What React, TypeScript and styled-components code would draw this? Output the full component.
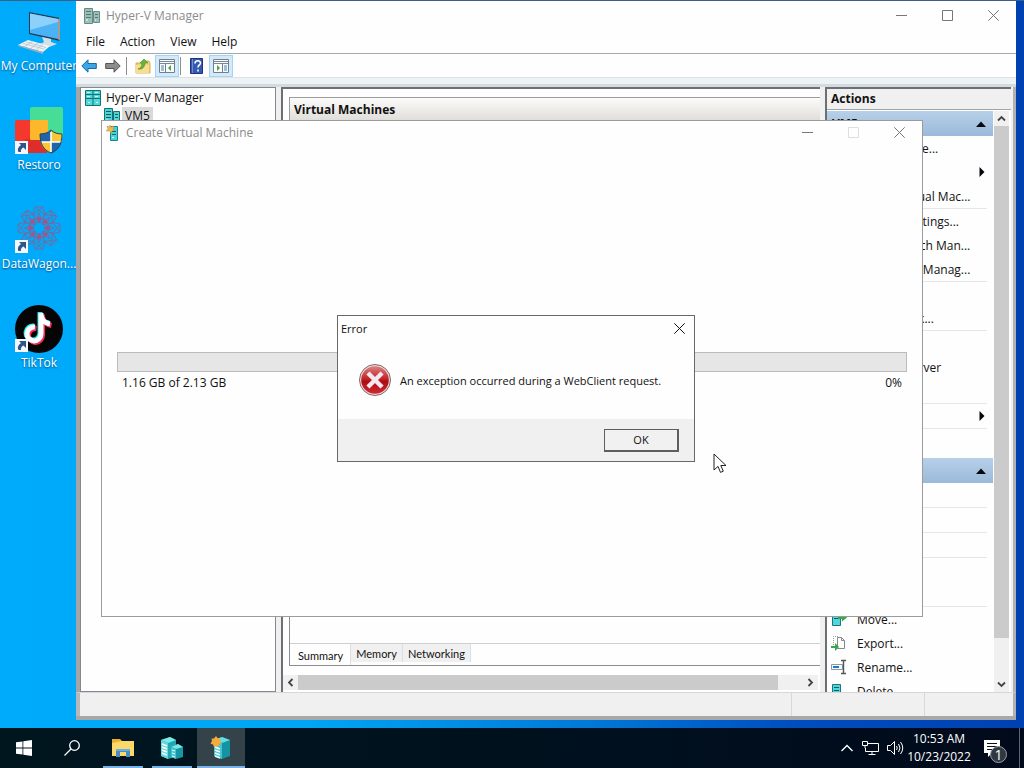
import { useState } from "react";
import styled, { createGlobalStyle } from "styled-components";

type ActionItem = { label: string; icon?: string; arrow?: boolean; line?: boolean };

const hostActions: ActionItem[] = [
  { label: "Quick Create..." },
  { label: "New", arrow: true },
  { label: "Import Virtual Mac...", line: true },
  { label: "Hyper-V Settings..." },
  { label: "Virtual Switch Man..." },
  { label: "Virtual SAN Manag...", line: true },
  { label: "Edit Disk" },
  { label: "Inspect Disk...", line: true },
  { label: "Service" },
  { label: "Remove Server" },
  { label: "Refresh", line: true },
  { label: "View", arrow: true, line: true },
  { label: "Help" },
];

const machineActions: ActionItem[] = [
  { label: "Connect...", line: true },
  { label: "Settings...", line: true },
  { label: "Start", line: true },
  { label: "Checkpoint" },
  { label: "Revert...", line: true },
  { label: "Move...", icon: "move" },
  { label: "Export...", icon: "export" },
  { label: "Rename...", icon: "rename" },
  { label: "Delete...", icon: "delete" },
];

const Minimize = () => (
  <svg width="11" height="11" viewBox="0 0 11 11" stroke="currentColor">
    <path d="M0 5.500h11" />
  </svg>
);

const Maximize = () => (
  <svg width="11" height="11" viewBox="0 0 11 11" stroke="currentColor" fill="none">
    <path d="M.5.500h10v10H.5z" />
  </svg>
);

const Close = () => (
  <svg width="11" height="11" viewBox="0 0 11 11" stroke="currentColor">
    <path d="M.3.300l10.400 10.400M10.700.300L.3 10.700" />
  </svg>
);

const Shortcut = () => (
  <g>
    <path d="M0 34h13v13H0z" fill="#f4f8fc" />
    <path d="M4 36h7v7l-2.500-2.500c-2 1-3 2.500-2.500 4.500H3.500c-1.500-3 0-5 2.500-7z" fill="#2f568c" />
  </g>
);

const ComputerIcon = () => (
  <svg width="48" height="48" viewBox="0 0 48 48">
    <path d="M14 4l31 6v23l-31-7z" fill="#26394d" />
    <path d="M15 5.500l28 5.500v20l-28-6z" fill="#4bb3f5" />
    <path d="M15 5.500l28 5.500v3L15 22z" fill="#8bd1fb" />
    <path d="M43 11l2-1v23l-2-2z" fill="#a99a8d" />
    <path d="M27 29l9 2v3l6 2-8 3-9-3 4-2z" fill="#d6dfe6" />
    <path d="M13 32l22 6-7 6L3 37z" fill="#eef2f5" />
    <path d="M3 37l25 7v2L3 38z" fill="#9fb1c0" />
    <path d="M11 34l20 5.500M8 35.500l21 5.500M18 33l-9 6M23 35l-8 6M28 36l-7 6" stroke="#b3c2ce" strokeWidth=".8" />
  </svg>
);

const RestoroIcon = () => (
  <svg width="48" height="48" viewBox="0 0 48 48">
    <rect x="15" y="0" width="33" height="31" rx="2" fill="#46dd96" />
    <path d="M2 13h14l2 33H10L0 38V15q0-2 2-2z" fill="#f5382e" />
    <path d="M10 32h22v14H12z" fill="#dc2f2c" />
    <path d="M15 2v11h17v18h0V17q0-4-4-4h-13z" fill="#7bd05c" />
    <rect x="15" y="13" width="18" height="20" rx="1" fill="#fcb72b" />
    <path d="M36 23c3 3 7 4 11 4 0 9-3 16-11 19-8-3-11-10-11-19 4 0 8-1 11-4z" fill="#1f65a8" />
    <path d="M36 35h10.500C45 40 42 44 36 46zM36 23v12H25v-8c4 0 8-1 11-4z" fill="#1f65a8" />
    <path d="M36 23c3 3 7 4 11 4v8H36zM36 35v11c-6-2-9-6-10.500-11z" fill="#fac636" />
    <path d="M36 25v20M26 35h20" stroke="#fff" strokeWidth="1.600" />
    <path d="M36 23c3 3 7 4 11 4 0 9-3 16-11 19-8-3-11-10-11-19 4 0 8-1 11-4z" fill="none" stroke="#29455e" />
    <Shortcut />
  </svg>
);

const WagonIcon = () => (
  <svg width="48" height="48" viewBox="0 0 48 48">
    <g fill="none" stroke="#6f6da3" strokeWidth="1">
      {[0, 45, 90, 135, 180, 225, 270, 315].map((deg) => (
        <g key={deg} transform={`rotate(${deg} 24 22)`}>
          <path d="M20 1l8 0 2 8-6 8-6-8zM20 1l10 8M28 1l-10 8M21 14l3-7 3 7" />
        </g>
      ))}
      <circle cx="24" cy="22" r="6" />
    </g>
    <g fill="#b84a7c">
      {[0, 45, 90, 135, 180, 225, 270, 315].map((deg) => (
        <path key={deg} d="M22 13l2-3 2 3-2 3z" transform={`rotate(${deg} 24 22)`} />
      ))}
    </g>
    <Shortcut />
  </svg>
);

const TikTokIcon = () => (
  <svg width="48" height="48" viewBox="0 0 48 48">
    <circle cx="24" cy="24" r="24" fill="#050505" />
    <g fill="none" strokeWidth="5">
      <path d="M26 8v21a7 7 0 1 1-6-7M26 10c1 6 4 8 9 9" stroke="#25ecec" transform="translate(-1 -1)" />
      <path d="M26 8v21a7 7 0 1 1-6-7M26 10c1 6 4 8 9 9" stroke="#f72c5d" transform="translate(1.500 1.500)" />
      <path d="M26 8v21a7 7 0 1 1-6-7M26 10c1 6 4 8 9 9" stroke="#fff" />
    </g>
    <Shortcut />
  </svg>
);

const ServerIcon = ({ faded = false }: { faded?: boolean }) => (
  <svg width="16" height="16" viewBox="0 0 16 16" opacity={faded ? 0.8 : 1}>
    <path d="M.5.500h8v15h-8zM9.500 3.500h6v11h-6z" fill={faded ? "#7fb4a8" : "#52d3d0"} stroke={faded ? "#466e6b" : "#107078"} />
    <path d="M2 3.500h5M2 6.500h5M2 9.500h5M11 6.500h3M11 9.500h3" stroke={faded ? "#35534e" : "#0b6069"} />
    <path d="M2 12h2M11 12h1" stroke="#eefcfc" />
  </svg>
);

const RackIcon = () => (
  <svg width="16" height="16" viewBox="0 0 16 16">
    <path d="M.5.500h15v15H.5z" fill="#53d7d6" stroke="#0f7379" />
    <path d="M8 0v16M1 4.500h14M1 8.500h14" stroke="#0f7379" />
    <path d="M2 2.500h3M10 2.500h3M2 6.500h3M10 6.500h3M3 12.500h2M11 12.500h2" stroke="#d4ffff" />
  </svg>
);

const WizardIcon = () => (
  <svg width="14" height="18" viewBox="0 0 14 18">
    <path d="M4.500 2.500h7v14h-7z" fill="#45d4dc" stroke="#21818b" />
    <path d="M6 7.500h4M6 10.500h4" stroke="#15656e" />
    <path d="M6 13.500h2" stroke="#fff" />
    <path d="M4 1l1 2 3-1-1 3 2 1.500-3 .5L5 9.500 3.500 7 0 7l2-2-1-3 2.500 1z" fill="#e9bd47" stroke="#a97d2a" strokeWidth=".4" />
  </svg>
);

const Arrow = ({ forward = false }: { forward?: boolean }) => (
  <svg width="16" height="14" viewBox="0 0 16 14">
    <path
      d="M.8 7L7 .8v3.700h8.300v5H7v3.700z"
      transform={forward ? "rotate(180 8 7)" : undefined}
      fill={forward ? "#8c8c8c" : "#38a6e8"}
      stroke={forward ? "#555" : "#1c679c"}
    />
  </svg>
);

const FolderUp = () => (
  <svg width="16" height="16" viewBox="0 0 16 16">
    <path d="M1 5h7l1-2h5l1 2v10H1z" fill="#f3d271" stroke="#c5a24c" strokeWidth=".8" />
    <path d="M1 7h13v8H1z" fill="#f8de8e" />
    <path d="M3 11c3-1 4-3 4-6H5l4-4 4 4h-3c0 4-3 7-7 6z" fill="#65b637" stroke="#41802a" strokeWidth=".5" />
  </svg>
);

const PaneIcon = ({ right = false }: { right?: boolean }) => (
  <svg width="16" height="14" viewBox="0 0 16 14">
    <path d="M.5.500h15v13H.5z" fill="#f8fbfd" stroke="#747f8b" />
    <path d="M1 2.500h14M1 4.500h14" stroke="#7c8792" />
    <path d={right ? "M9.500 5v8" : "M6.500 5v8"} stroke="#747f8b" />
    <path d={right ? "M11 7h3M11 9h3M11 11h3" : "M2 7h3M2 9h3M2 11h3"} stroke="#4a83ac" />
    <path d={right ? "M4 6l3 3-3 3z" : "M12 6L9 9l3 3z"} fill="#51a13d" />
  </svg>
);

const HelpIcon = () => (
  <svg width="14" height="16" viewBox="0 0 14 16">
    <path d="M.5.500h12v15H.5z" fill="#3459b0" stroke="#1b357d" />
    <path d="M2.500 1v14" stroke="#708ed2" />
    <path d="M5 5.500C5 2 10.500 2 10.500 5c0 2-2.500 2-2.500 4.500M8 11.500v2" fill="none" stroke="#fff" strokeWidth="1.600" />
  </svg>
);

const ActionIcon = ({ name }: { name?: string }) => (
  <svg width="16" height="16" viewBox="0 0 16 16">
    {(name === "move" || name === "delete") && (
      <g>
        <path d="M1.500 1.500h8v13h-8z" fill="#51d6dd" stroke="#18767d" />
        <path d="M3 4.500h5M3 7.500h5" stroke="#0c5d66" />
      </g>
    )}
    {name === "move" && <path d="M7 5h4V2l5 4.500-5 4V8H7z" fill="#35a849" />}
    {name === "export" && (
      <g>
        <path d="M2.500 10V1.500h5" fill="none" stroke="#999" strokeDasharray="1 1" />
        <path d="M6.500 2.500h4l3 3v8h-7z" fill="#fff" stroke="#888" />
        <path d="M10.500 2.500v3h3" fill="none" stroke="#888" />
        <path d="M0 11h4V8l4 4-4 4v-3H0z" fill="#35a849" />
      </g>
    )}
    {name === "rename" && (
      <g>
        <path d="M.5 5.500h11v5H.5z" fill="#f4faff" stroke="#8a9aa8" />
        <path d="M2 7h6v2H2z" fill="#1f79c2" />
        <path d="M10 1.500h5M12.500 2v12M10 14.500h5" stroke="#555" strokeWidth="1.400" />
      </g>
    )}
  </svg>
);

const Chevron = ({ turn = 0 }: { turn?: number }) => (
  <svg width="9" height="9" viewBox="0 0 9 9">
    <path d="M1 6.500L4.500 3 8 6.500" transform={`rotate(${turn} 4.500 4.500)`} fill="none" stroke="#444" strokeWidth="1.800" />
  </svg>
);

const Triangle = ({ side = false }: { side?: boolean }) => (
  <svg width="10" height="10" viewBox="0 0 10 10">
    <path d={side ? "M2.500 0v10l5-5z" : "M0 8h10L5 2.500z"} fill="#05070f" />
  </svg>
);

const ErrorIcon = () => (
  <svg width="32" height="32" viewBox="0 0 32 32">
    <defs>
      <linearGradient id="red" x1="0" y1="0" x2="0" y2="1">
        <stop offset="0" stopColor="#d98383" />
        <stop offset=".45" stopColor="#c4262b" />
        <stop offset=".55" stopColor="#ae0c13" />
        <stop offset="1" stopColor="#cf2a31" />
      </linearGradient>
    </defs>
    <circle cx="16" cy="16" r="15.500" fill="#e9d9d9" stroke="#8e6262" />
    <circle cx="16" cy="16" r="13.800" fill="url(#red)" />
    <path d="M10.500 10.500l11 11M21.500 10.500l-11 11" stroke="#f5e9ef" strokeWidth="4.400" strokeLinecap="square" />
  </svg>
);

const WindowsLogo = () => (
  <svg width="16" height="16" viewBox="0 0 16 16" fill="#fff">
    <path d="M0 2.300l6.500-.9v6.200H0zM7.300 1.300L16 0v7.600H7.300zM0 8.400h6.500v6.200L0 13.700zM7.300 8.400H16V16l-8.700-1.300z" />
  </svg>
);

const SearchIcon = () => (
  <svg width="16" height="16" viewBox="0 0 16 16" fill="none" stroke="#fff" strokeWidth="1.300">
    <circle cx="10.500" cy="5.500" r="4.800" />
    <path d="M7 9L.5 15.500" />
  </svg>
);

const ExplorerIcon = () => (
  <svg width="22" height="20" viewBox="0 0 22 20">
    <path d="M0 1h8l2 2h12v15H0z" fill="#e9ae35" />
    <path d="M0 5l10-2h12v15H0z" fill="#fbd869" />
    <path d="M4 11h14v8h-4v-5H8v5H4z" fill="#438dc9" />
    <path d="M4 11h14v2H4z" fill="#69afdf" />
  </svg>
);

const TaskServerIcon = () => (
  <svg width="24" height="24" viewBox="0 0 24 24">
    <path d="M1 4l9-3 6 3v17l-8 2-7-3z" fill="#20a9b5" />
    <path d="M1 4l9-3 6 3-8 3z" fill="#7deae7" />
    <path d="M1 4l7 3v16l-7-3z" fill="#61d9db" />
    <path d="M2 8l5 2M2 11l5 2M2 14l5 2M2 17l5 2" stroke="#fff" strokeWidth="1.500" />
    <path d="M11 11l7-3 5 3v10l-7 2-5-2z" fill="#1796a4" />
    <path d="M11 11l7-3 5 3-7 2z" fill="#7ae7e5" />
    <path d="M11 11l5 2v10l-5-2z" fill="#43c5cb" />
    <path d="M12 14l3 1M12 17l3 1M12 20l3 1" stroke="#fff" />
  </svg>
);

const TaskWizardIcon = () => (
  <svg width="22" height="24" viewBox="0 0 22 24">
    <path d="M4 4l8-3 8 3v16l-8 3-8-3z" fill="#1493a2" />
    <path d="M4 4l8-3 8 3-8 3z" fill="#60dee2" />
    <path d="M4 4l8 3v16l-8-3z" fill="#42c4ce" />
    <path d="M5 11l5 2M5 14l5 2M5 17l5 2M5 20l5 2" stroke="#fff" strokeWidth="1.400" />
    <path d="M6 0l1.500 2L10 2 10 4.500 12 6 9.500 8 9 10.500 6.500 10 4 11 3 8.500.5 7.500 2 5 1.500 2.500 4 2.500z" fill="#f2ab3c" />
  </svg>
);

const App = () => {
  const [dialogOpen, setDialogOpen] = useState(true);
  return (
    <Desktop>
      <GlobalStyle />
      <Workspace>
        <Shortcuts>
          <ShortcutItem><ComputerIcon />My Computer</ShortcutItem>
          <ShortcutItem><RestoroIcon />Restoro</ShortcutItem>
          <ShortcutItem><WagonIcon />DataWagon...</ShortcutItem>
          <ShortcutItem><TikTokIcon />TikTok</ShortcutItem>
        </Shortcuts>

        <ManagerWindow>
          <TitleBar $main>
            <ServerIcon faded />
            <TitleText>Hyper-V Manager</TitleText>
            <CaptionButton aria-label="Minimize"><Minimize /></CaptionButton>
            <CaptionButton aria-label="Maximize"><Maximize /></CaptionButton>
            <CaptionButton aria-label="Close"><Close /></CaptionButton>
          </TitleBar>
          <MenuBar>
            <MenuButton>File</MenuButton>
            <MenuButton>Action</MenuButton>
            <MenuButton>View</MenuButton>
            <MenuButton>Help</MenuButton>
          </MenuBar>
          <Toolbar>
            <ToolButton aria-label="Back"><Arrow /></ToolButton>
            <ToolButton aria-label="Forward"><Arrow forward /></ToolButton>
            <ToolLine />
            <ToolButton aria-label="Up"><FolderUp /></ToolButton>
            <ToolButton aria-label="Console tree" $pressed><PaneIcon /></ToolButton>
            <ToolLine />
            <ToolButton aria-label="Help"><HelpIcon /></ToolButton>
            <ToolButton aria-label="Action pane" $pressed><PaneIcon right /></ToolButton>
          </Toolbar>
          <Strip />
          <Panes>
            <TreePane>
              <TreeRow $level={0}><RackIcon /><TreeLabel>Hyper-V Manager</TreeLabel></TreeRow>
              <TreeRow $level={1}><ServerIcon /><TreeLabel $selected>VM5</TreeLabel></TreeRow>
            </TreePane>
            <CenterPane>
              <MachinesBox>
                <PaneHeading>Virtual Machines</PaneHeading>
              </MachinesBox>
              <DetailsBox>
                <Tabs>
                  <Tab $active>Summary</Tab>
                  <Tab>Memory</Tab>
                  <Tab>Networking</Tab>
                </Tabs>
              </DetailsBox>
              <HScroll>
                <ScrollButton aria-label="Scroll left"><Chevron turn={-90} /></ScrollButton>
                <HTrack><HThumb /></HTrack>
                <ScrollButton aria-label="Scroll right"><Chevron turn={90} /></ScrollButton>
              </HScroll>
            </CenterPane>
            <ActionsPane>
              <ActionsHeading>Actions</ActionsHeading>
              <ActionsBody>
                <ActionsList>
                  <Group title="VM5" items={hostActions} />
                  <Group title="Server" items={machineActions} />
                </ActionsList>
                <VScroll>
                  <ScrollButton aria-label="Scroll up"><Chevron /></ScrollButton>
                  <VTrack><VThumb /></VTrack>
                  <ScrollButton aria-label="Scroll down"><Chevron turn={180} /></ScrollButton>
                </VScroll>
              </ActionsBody>
            </ActionsPane>
          </Panes>
          <StatusBar><span /><span /><span /></StatusBar>
        </ManagerWindow>

        <CreateWindow>
          <TitleBar>
            <WizardIcon />
            <TitleText>Create Virtual Machine</TitleText>
            <CaptionButton aria-label="Minimize"><Minimize /></CaptionButton>
            <CaptionButton aria-label="Maximize" disabled><Maximize /></CaptionButton>
            <CaptionButton aria-label="Close"><Close /></CaptionButton>
          </TitleBar>
          <Download>
            <ProgressTrack role="progressbar" aria-valuenow={0} aria-label="Download progress" />
            <ProgressLabels>
              <span>1.16 GB of 2.13 GB</span>
              <span>0%</span>
            </ProgressLabels>
          </Download>
        </CreateWindow>

        {dialogOpen && (
          <ErrorDialog role="alertdialog" aria-labelledby="error-title">
            <ErrorTitle>
              <span id="error-title">Error</span>
              <DialogClose aria-label="Close" onClick={() => setDialogOpen(false)}><Close /></DialogClose>
            </ErrorTitle>
            <ErrorMessage>
              <ErrorIcon />
              <ErrorText>An exception occurred during a WebClient request.</ErrorText>
            </ErrorMessage>
            <ErrorFooter>
              <OkButton onClick={() => setDialogOpen(false)}>OK</OkButton>
            </ErrorFooter>
          </ErrorDialog>
        )}

        <Pointer width="14" height="21" viewBox="0 0 14 21">
          <path d="M1 1v16l4-3.600 2.500 6 2.800-1.200-2.500-5.700H13z" fill="#fff" stroke="#222" />
        </Pointer>
      </Workspace>

      <Taskbar>
        <TaskButton aria-label="Start"><WindowsLogo /></TaskButton>
        <TaskButton aria-label="Search"><SearchIcon /></TaskButton>
        <TaskApps>
          <TaskButton aria-label="File Explorer" $running><ExplorerIcon /></TaskButton>
          <TaskButton aria-label="Hyper-V Manager" $running><TaskServerIcon /></TaskButton>
          <TaskButton aria-label="Create Virtual Machine" $running $active><TaskWizardIcon /></TaskButton>
        </TaskApps>
        <Tray>
          <TrayButton aria-label="Show hidden icons">
            <svg width="12" height="8" viewBox="0 0 12 8" fill="none" stroke="#fff" strokeWidth="1.400">
              <path d="M.5 7L6 1.500 11.500 7" />
            </svg>
          </TrayButton>
          <TrayButton aria-label="Network">
            <svg width="18" height="16" viewBox="0 0 18 16" fill="none" stroke="#fff">
              <path d="M5.500 3.500h11v8h-13V8M.5 1.500h5v4h-5zM3 5.500V8M10 12v2M6.500 14.500h7" />
            </svg>
          </TrayButton>
          <TrayButton aria-label="Volume">
            <svg width="18" height="16" viewBox="0 0 18 16" fill="none" stroke="#fff">
              <path d="M1.500 5.500h3l4-4v13l-4-4h-3zM10.500 6q1.500 2 0 4M12.500 4q3 4 0 8M14.500 2q4.500 6 0 12" />
            </svg>
          </TrayButton>
          <Clock>
            <span>10:53 AM</span>
            <span>10/23/2022</span>
          </Clock>
          <NoticeButton aria-label="1 notification">
            <svg width="18" height="18" viewBox="0 0 18 18">
              <path d="M1 1h16v13H9l-4 4v-4H1z" fill="#fff" />
              <path d="M4 4.500h10M4 7.500h10M4 10.500h7" stroke="#07111e" />
            </svg>
            <Badge>1</Badge>
          </NoticeButton>
          <ShowDesktop aria-label="Show desktop" />
        </Tray>
      </Taskbar>
    </Desktop>
  );
};

const Group = ({ title, items }: { title: string; items: ActionItem[] }) => (
  <GroupBox>
    <GroupHeading>{title}<Triangle /></GroupHeading>
    {items.map((item) => (
      <ActionRow key={item.label} $line={item.line}>
        <ActionIcon name={item.icon} />
        <ActionLabel>{item.label}</ActionLabel>
        {item.arrow && <Triangle side />}
      </ActionRow>
    ))}
  </GroupBox>
);

const GlobalStyle = createGlobalStyle`
  * {
    box-sizing: border-box;
  }
  body {
    margin: 0;
    overflow: hidden;
    font-family: "Open Sans", "Noto Sans", sans-serif;
    font-size: 12px;
    color: #111;
  }
  button {
    padding: 0;
    border: 0;
    background: none;
    font: inherit;
    color: inherit;
  }
  svg {
    flex: none;
    display: block;
  }
`;

const Desktop = styled.div`
  height: 100vh;
  display: grid;
  grid-template-rows: 1fr 40px;
`;
const Workspace = styled.main`
  position: relative;
  min-height: 0;
  overflow: hidden;
  border-top: 1px solid #3d5f82;
  background: linear-gradient(90deg, #00abfc 0%, #00a5f5 30%, #0078d8 58%, #004dbe 78%, #0041b2 100%);
`;
const Shortcuts = styled.nav`
  width: 78px;
`;
const ShortcutItem = styled.button`
  width: 78px;
  height: 99px;
  padding-top: 7px;
  display: flex;
  flex-direction: column;
  align-items: center;
  line-height: 20px;
  color: #fff;
  white-space: nowrap;
  text-shadow: 0 1px 2px #00467e;
`;

const ManagerWindow = styled.section`
  position: absolute;
  inset: 0 8px 8px 76px;
  display: flex;
  flex-direction: column;
  background: #fefefe;
  border-bottom: 4px solid #a6a8a9;
`;
const TitleBar = styled.header<{ $main?: boolean }>`
  height: ${({ $main }) => ($main ? 29 : 23)}px;
  flex: none;
  display: flex;
  align-items: center;
  padding-left: ${({ $main }) => ($main ? 8 : 4)}px;
  color: #8c8c8c;
`;
const TitleText = styled.h1`
  flex: 1;
  margin: 0 0 0 6px;
  font-size: 12px;
  font-weight: 400;
`;
const CaptionButton = styled.button`
  width: 46px;
  height: 23px;
  display: grid;
  place-items: center;
  color: #777;
  &:disabled {
    color: #dedede;
  }
`;
const MenuBar = styled.nav`
  height: 24px;
  flex: none;
  display: flex;
  gap: 15px;
  padding-left: 10px;
  border-bottom: 1px solid #a6a9ab;
`;
const MenuButton = styled.button`
  line-height: 24px;
`;
const Toolbar = styled.div`
  height: 23px;
  flex: none;
  display: flex;
  align-items: center;
  padding-left: 1px;
`;
const ToolButton = styled.button<{ $pressed?: boolean }>`
  width: 24px;
  height: 22px;
  display: grid;
  place-items: center;
  border: 1px solid ${({ $pressed }) => ($pressed ? "#a5d3f3" : "transparent")};
  background: ${({ $pressed }) => ($pressed ? "#d3eafb" : "none")};
`;
const ToolLine = styled.span`
  width: 1px;
  height: 18px;
  margin: 0 4px 0 1px;
  background: #8d8d8d;
`;
const Strip = styled.div`
  height: 10px;
  flex: none;
  border-top: 1px solid #dfe2e4;
  border-bottom: 3px solid #d1dbe0;
  background: #edf2f5;
`;
const Panes = styled.div`
  flex: 1;
  min-height: 0;
  display: grid;
  grid-template-columns: 196px minmax(0, 1fr) 186px;
  column-gap: 5px;
  padding-right: 2px;
  border-left: 4px solid #a3a5a6;
  border-right: 3px solid #b2b2b4;
  background: #f0f0f0;
`;
const TreePane = styled.aside`
  padding-top: 1px;
  border: 1px solid #828790;
  background: #fefefe;
`;
const TreeRow = styled.div<{ $level: number }>`
  height: 18px;
  display: flex;
  align-items: center;
  gap: 2px;
  padding-left: ${({ $level }) => 4 + $level * 19}px;
`;
const TreeLabel = styled.span<{ $selected?: boolean }>`
  padding: 0 3px;
  line-height: 18px;
  background: ${({ $selected }) => ($selected ? "#d9d9d9" : "none")};
`;
const CenterPane = styled.section`
  min-width: 0;
  display: flex;
  flex-direction: column;
  border-top: 2px solid #6d6f72;
  border-left: 2px solid #6d6f72;
  background: #fefefe;
`;
const MachinesBox = styled.div`
  margin: 8px 0 0 6px;
  border: 1px solid #9b9b9b;
  border-width: 1px 0 0 1px;
`;
const PaneHeading = styled.h2`
  margin: 0;
  padding-left: 4px;
  font-size: 12px;
  line-height: 24px;
  background: linear-gradient(#fbfbfa, #dedcd7);
`;
const DetailsBox = styled.div`
  flex: 1;
  display: flex;
  align-items: flex-end;
  margin-left: 6px;
  border: 1px solid #8d8d8d;
  border-width: 0 0 1px 1px;
`;
const Tabs = styled.div`
  flex: 1;
  display: flex;
  height: 22px;
  padding-left: 1px;
  border-top: 1px solid #cfcfcf;
  font-family: Lato, sans-serif;
  font-size: 11px;
`;
const Tab = styled.button<{ $active?: boolean }>`
  height: ${({ $active }) => ($active ? 21 : 18)}px;
  padding: ${({ $active }) => ($active ? "1px 7px 0" : "0 5px")};
  border-right: 1px solid #dcdfe2;
  background: ${({ $active }) => ($active ? "#fefefe" : "#f0f0f0")};
`;
const HScroll = styled.div`
  height: 15px;
  flex: none;
  display: flex;
  margin: 9px 2px 2px 0;
  background: #f0f0f0;
`;
const ScrollButton = styled.button`
  width: 15px;
  height: 15px;
  display: grid;
  place-items: center;
`;
const HTrack = styled.div`
  flex: 1;
`;
const HThumb = styled.div`
  width: 95%;
  height: 15px;
  background: #cbcbcb;
`;
const ActionsPane = styled.aside`
  min-height: 0;
  display: flex;
  flex-direction: column;
  border-top: 2px solid #6d6f72;
  border-left: 2px solid #6d6f72;
  background: #fefefe;
`;
const ActionsHeading = styled.h2`
  margin: 0 0 1px;
  padding-left: 4px;
  border-bottom: 1px solid #a4a4a4;
  background: #f0f0f0;
  font-size: 12px;
  line-height: 20px;
`;
const ActionsBody = styled.div`
  flex: 1;
  min-height: 0;
  display: flex;
  gap: 1px;
  padding-right: 2px;
`;
const ActionsList = styled.div`
  flex: 1;
  min-width: 0;
  overflow: hidden;
`;
const GroupBox = styled.div`
  padding-bottom: 5px;
`;
const GroupHeading = styled.h3`
  height: 25px;
  margin: 0;
  display: flex;
  align-items: center;
  justify-content: space-between;
  padding: 0 7px 0 5px;
  background: linear-gradient(#b7d0e9, #9bb9d9);
  font-size: 12px;
`;
const ActionRow = styled.button<{ $line?: boolean }>`
  width: calc(100% - 6px);
  height: ${({ $line }) => ($line ? 25 : 24)}px;
  display: flex;
  align-items: center;
  gap: 10px;
  padding-left: 4px;
  border-bottom: ${({ $line }) => ($line ? "1px solid #e6e6e6" : "0")};
  text-align: left;
`;
const ActionLabel = styled.span`
  flex: 1;
  white-space: nowrap;
`;
const VScroll = styled.div`
  width: 15px;
  display: flex;
  flex-direction: column;
  background: #f0f0f0;
`;
const VTrack = styled.div`
  flex: 1;
`;
const VThumb = styled.div`
  height: 93%;
  background: #cbcbcb;
`;
const StatusBar = styled.footer`
  height: 24px;
  flex: none;
  display: grid;
  grid-template-columns: 1fr 133px 89px;
  border-top: 1px solid #d7d7d7;
  border-left: 4px solid #b8b8b8;
  border-right: 3px solid #b2b2b4;
  background: #f0f0f0;
  span + span {
    border-left: 1px solid #d9d9d9;
  }
`;

const CreateWindow = styled.section`
  position: absolute;
  inset: 119px 101px 111px;
  display: flex;
  flex-direction: column;
  border: 1px solid #9b9b9b;
  background: #fefefe;
`;
const Download = styled.div`
  flex: 1;
  display: flex;
  flex-direction: column;
  justify-content: center;
  padding: 0 15px 14px;
`;
const ProgressTrack = styled.div`
  height: 20px;
  border: 1px solid #bcbcbc;
  background: #e6e6e6;
`;
const ProgressLabels = styled.div`
  display: flex;
  justify-content: space-between;
  padding: 0 5px;
  line-height: 22px;
`;

const ErrorDialog = styled.section`
  position: absolute;
  top: 314px;
  left: 337px;
  width: 358px;
  border: 1px solid #686868;
  background: #fefefe;
`;
const ErrorTitle = styled.header`
  height: 24px;
  display: flex;
  align-items: center;
  justify-content: space-between;
  padding-left: 3px;
  font-size: 11px;
`;
const DialogClose = styled.button`
  width: 30px;
  height: 24px;
  display: grid;
  place-items: center;
`;
const ErrorMessage = styled.div`
  height: 79px;
  display: flex;
  align-items: center;
  gap: 9px;
  padding-left: 21px;
  font-size: 11px;
  white-space: nowrap;
`;
const ErrorText = styled.p`
  margin: 0;
  padding-top: 2px;
`;
const ErrorFooter = styled.footer`
  height: 42px;
  display: flex;
  align-items: center;
  justify-content: flex-end;
  padding-right: 15px;
  background: #f0f0f0;
`;
const OkButton = styled.button`
  width: 75px;
  height: 23px;
  border: 1px solid #5e5e5e;
  border-width: 1px 2px 2px 1px;
  background: #f1f1f1;
  font-size: 11px;
`;
const Pointer = styled.svg`
  position: absolute;
  top: 452px;
  left: 713px;
`;

const Taskbar = styled.footer`
  display: flex;
  background: linear-gradient(90deg, #00161f, #00101e 60%, #010a1b);
  color: #fff;
`;
const TaskApps = styled.div`
  display: flex;
  gap: 1px;
  margin-left: 3px;
`;
const TaskButton = styled.button<{ $running?: boolean; $active?: boolean }>`
  position: relative;
  width: 48px;
  height: 40px;
  display: grid;
  place-items: center;
  background: ${({ $active }) => ($active ? "#34434a" : "none")};
  &::after {
    content: "";
    position: absolute;
    bottom: 0;
    left: ${({ $active }) => ($active ? 0 : 4)}px;
    right: ${({ $active }) => ($active ? 0 : 4)}px;
    height: 2px;
    background: ${({ $running }) => ($running ? "#78b3e6" : "none")};
  }
`;
const Tray = styled.div`
  display: flex;
  align-items: center;
  margin-left: auto;
`;
const TrayButton = styled.button`
  width: 24px;
  height: 40px;
  display: grid;
  place-items: center;
`;
const Clock = styled.div`
  width: 64px;
  display: flex;
  flex-direction: column;
  align-items: center;
  line-height: 18px;
`;
const NoticeButton = styled.button`
  position: relative;
  width: 48px;
  height: 40px;
  padding-left: 12px;
  display: flex;
  align-items: center;
`;
const Badge = styled.span`
  position: absolute;
  top: 18px;
  left: 19px;
  width: 17px;
  height: 17px;
  border: 1px solid #9aa0a8;
  border-radius: 50%;
  background: #303842;
  font-size: 14px;
  line-height: 15px;
`;
const ShowDesktop = styled.button`
  width: 5px;
  height: 40px;
  border-left: 1px solid #5b6470;
`;

export default App;
